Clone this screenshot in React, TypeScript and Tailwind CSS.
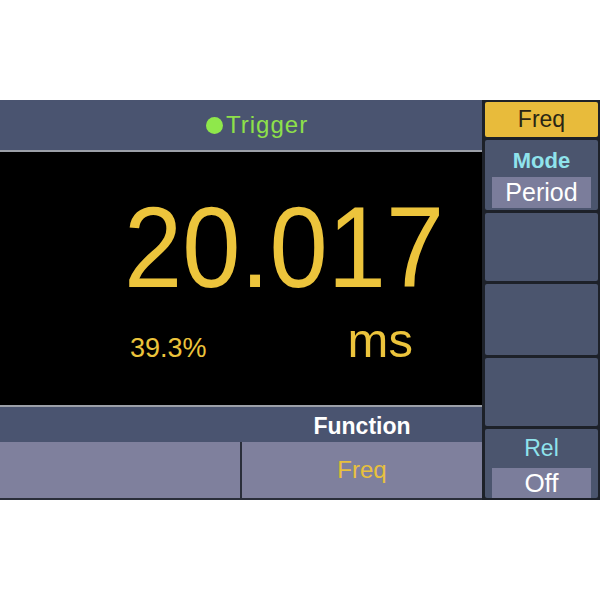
export default function App() {
  return (
    <div className="w-[600px] h-[600px] bg-white pt-[100px] font-['Liberation_Sans',Arial,sans-serif]">
      <div className="h-[400px] flex bg-[#1d2129]">
        {/* Left panel */}
        <div className="w-[482px] flex flex-col">
          <div className="h-[52px] bg-[#4a5470] border-b-2 border-[#9ca0a8] flex items-center pl-[206px]">
            <span className="w-[17px] h-[17px] rounded-full bg-[#8fe84b] mr-[3px]"></span>
            <span className="text-[24px] leading-none tracking-[1px] text-[#8ee04a]">Trigger</span>
          </div>
          <div className="h-[253px] bg-black flex flex-col text-[#ecc43c]">
            <div className="mt-[38px] ml-[124px] text-[115px] leading-none whitespace-nowrap scale-x-[0.91] origin-left">
              20.017
            </div>
            <div className="mt-[11px] flex items-baseline leading-none whitespace-nowrap">
              <span className="ml-[130px] text-[27px]">39.3%</span>
              <span className="ml-[141px] text-[49px]">ms</span>
            </div>
          </div>
          <div className="h-[37px] bg-[#4a5470] border-t-2 border-[#9ca0a8] flex">
            <div className="w-[242px]"></div>
            <div className="flex-1 flex items-center justify-center pt-[3px] text-[23px] font-bold text-white leading-none">
              Function
            </div>
          </div>
          <div className="h-[58px] flex gap-[2px] pb-[2px] bg-[#2a2e3a]">
            <div className="w-[240px] bg-[#7f809d]"></div>
            <div className="flex-1 bg-[#7f809d] flex items-center justify-center text-[24px] text-[#e8c13c] leading-none">
              Freq
            </div>
          </div>
        </div>
        {/* Right column */}
        <div className="flex-1 flex flex-col gap-[3px] pl-[3px] pr-[2px] py-[2px]">
          <div className="h-[35px] bg-[#e8bb3b] rounded-[2px] flex items-center justify-center text-[23px] text-[#2a2614] leading-none">
            Freq
          </div>
          <div className="h-[70px] bg-[#4b556e] rounded-[2px] flex flex-col items-center pt-[10px] px-[7px] pb-[2px]">
            <div className="text-[22px] font-bold text-[#8fe3ec] leading-none">Mode</div>
            <div className="mt-[5px] self-stretch h-[31px] bg-[#7b7d9b] flex items-center justify-center text-[25px] text-white leading-none">
              Period
            </div>
          </div>
          <div className="h-[69px] bg-[#4b556e] rounded-[2px]"></div>
          <div className="h-[71px] bg-[#4b556e] rounded-[2px]"></div>
          <div className="h-[69px] bg-[#4b556e] rounded-[2px]"></div>
          <div className="flex-1 bg-[#4b556e] rounded-[2px] flex flex-col items-center pt-[8px] px-[7px]">
            <div className="text-[23px] text-[#8fe3ec] leading-none">Rel</div>
            <div className="mt-[8px] self-stretch h-[30px] bg-[#7b7d9b] flex items-center justify-center text-[26px] text-white leading-none">
              Off
            </div>
          </div>
        </div>
      </div>
    </div>
  );
}
